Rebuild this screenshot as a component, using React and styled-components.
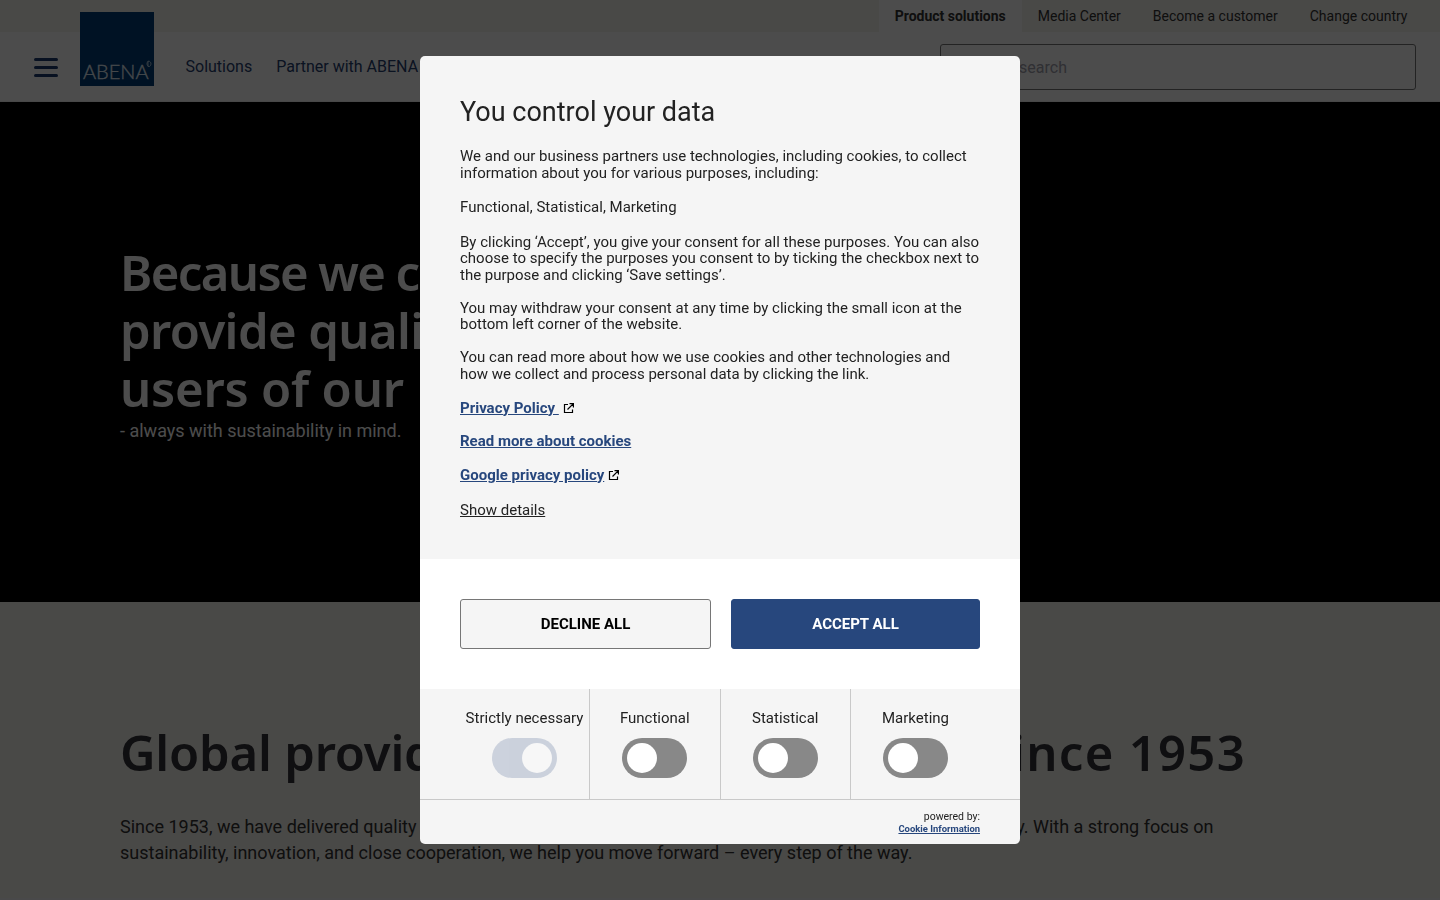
import React from "react"
import styled, { createGlobalStyle } from "styled-components"

const links = ["Media Center", "Become a customer", "Change country"]
const categories = ["Strictly necessary", "Functional", "Statistical", "Marketing"]

const ExternalIcon = () => (
  <Icon viewBox="0 0 11 11" width="11" height="11">
    <path d="M5 1.500H1.500v8h8V6.500M6.500 0.600h3.900v3.900M10.400 0.600L4.500 6.500" />
  </Icon>
)

const App = () => (
  <>
    <GlobalStyle />
    <Page>
      <TopBar>
        <TopLink $active>Product solutions</TopLink>
        {links.map(l => <TopLink key={l}>{l}</TopLink>)}
      </TopBar>
      <Header>
        <Burger><span /><span /><span /></Burger>
        <Logo>
          <LogoText>ABENA</LogoText>
          <Leaf viewBox="0 0 6 8" width="6" height="8">
            <path d="M2.500 .8C.5 2.500.5 5 2.500 6.800C1.800 4.800 1.800 3 2.500 .8zM3.300 1.200C5.500 2.500 5.500 5 3.200 6.800" />
          </Leaf>
        </Logo>
        <NavLink>Solutions</NavLink>
        <NavLink>Partner with ABENA</NavLink>
        <Search>Start your search</Search>
      </Header>
      <Hero>
        <HeroTitle>
          <Line $spacing={-1.6}>Because we care, we</Line>
          <Line $spacing={-0.6}>provide quality for</Line>
          <Line $spacing={-0.2}>users of our products</Line>
        </HeroTitle>
        <HeroText>- always with sustainability in mind.</HeroText>
      </Hero>
      <Intro>
        <IntroTitle><Line $spacing={-0.2}>Global provider of</Line><Line $spacing={1.3}>since 1953</Line></IntroTitle>
        <IntroText>
          <IntroLine><span>Since 1953, we have delivered quality</span><span>every day. With a strong focus on</span></IntroLine>
          <div>sustainability, innovation, and close cooperation, we help you move forward – every step of the way.</div>
        </IntroText>
      </Intro>
    </Page>
    <Overlay>
      <Dialog>
        <Content>
          <Title>You control your data</Title>
          <Paragraph>
            We and our business partners use technologies, including cookies, to collect
            information about you for various purposes, including:
          </Paragraph>
          <Paragraph $gap={18.5}>Functional, Statistical, Marketing</Paragraph>
          <Paragraph $gap={16.5}>
            By clicking ‘Accept’, you give your consent for all these purposes. You can also
            choose to specify the purposes you consent to by ticking the checkbox next to
            the purpose and clicking ‘Save settings’.
          </Paragraph>
          <Paragraph $gap={16.5}>
            You may withdraw your consent at any time by clicking the small icon at the
            bottom left corner of the website.
          </Paragraph>
          <Paragraph>
            You can read more about how we use cookies and other technologies and
            how we collect and process personal data by clicking the link.
          </Paragraph>
          <LinkRow><PolicyLink>Privacy Policy&nbsp;</PolicyLink><ExternalIcon /></LinkRow>
          <LinkRow><PolicyLink>Read more about cookies</PolicyLink></LinkRow>
          <LinkRow><PolicyLink>Google privacy policy</PolicyLink><ExternalIcon /></LinkRow>
          <Details>Show details</Details>
        </Content>
        <Actions>
          <Button>DECLINE ALL</Button>
          <Button $primary>ACCEPT ALL</Button>
        </Actions>
        <Categories>
          {categories.map((name, i) => (
            <Category key={name}>
              <span>{name}</span>
              <Toggle $on={i === 0}><Knob /></Toggle>
            </Category>
          ))}
        </Categories>
        <Footer>
          <div>powered by:</div>
          <Brand>Cookie Information</Brand>
        </Footer>
      </Dialog>
    </Overlay>
  </>
)

export default App

const GlobalStyle = createGlobalStyle`
  * {
    box-sizing: border-box;
  }
  body {
    margin: 0;
    overflow: hidden;
    font-family: Roboto, "Liberation Sans", sans-serif;
  }
`
const Page = styled.div`
  height: 900px;
  overflow: hidden;
  background: #f4f3f8;
`
const TopBar = styled.div`
  height: 32px;
  display: flex;
  justify-content: flex-end;
  padding-right: 16.500px;
  background: #f5f3ee;
`
const TopLink = styled.div`
  padding: 0 16px;
  line-height: 32px;
  font-size: 14px;
  font-weight: ${p => p.$active ? 700 : 400};
  color: #323232;
  background: ${p => p.$active ? '#fff' : 'none'};
`
const Header = styled.div`
  height: 70px;
  display: flex;
  align-items: center;
  padding: 0 24px 0 34px;
  border-bottom: 1px solid #f0f0f0;
  background: #fff;
`
const Burger = styled.div`
  width: 24px;
  margin-top: 1px;
  display: flex;
  flex-direction: column;
  gap: 5px;

  & > span {
    height: 3px;
    border-radius: 2px;
    background: #1c3b70;
  }
`
const Logo = styled.div`
  position: relative;
  width: 74px;
  height: 74px;
  margin: -36px 31.500px 0 22px;
  display: flex;
  align-items: flex-end;
  background: #003c78;
`
const LogoText = styled.div`
  padding-left: 3px;
  font-family: Lato, sans-serif;
  font-weight: 300;
  font-size: 20px;
  line-height: 29px;
  color: #e6f2fa;
  -webkit-text-stroke: 0.3px #e6f2fa;
`
const Leaf = styled.svg`
  position: absolute;
  right: 2px;
  top: 48px;
  fill: none;
  stroke: #dcebf5;
  stroke-width: 0.8;
`
const NavLink = styled.div`
  margin-right: 24px;
  font-size: 16px;
  white-space: nowrap;
  color: #27406f;
`
const Search = styled.div`
  width: 476px;
  height: 46px;
  margin-left: auto;
  margin-top: 1px;
  padding-right: 348px;
  border: 1px solid #777;
  border-radius: 3px;
  font-size: 16px;
  line-height: 46px;
  text-align: right;
  white-space: nowrap;
  color: #a0a0ac;
`
const Hero = styled.div`
  height: 500px;
  padding: 141px 120px 0;
  background: #000;
  color: #fff;
`
const HeroTitle = styled.div`
  margin-bottom: 2px;
  font-family: "Noto Sans", sans-serif;
  font-weight: 600;
  font-size: 49px;
  line-height: 58px;
`
const Line = styled.div`
  letter-spacing: ${p => p.$spacing}px;
  white-space: nowrap;
`
const HeroText = styled.div`
  font-size: 18px;
  line-height: 24px;
`
const Intro = styled.div`
  height: 296px;
  padding: 115px 120px 0;
  background: #f5f3ee;
  color: #323232;
`
const IntroTitle = styled.div`
  width: 1126px;
  display: flex;
  justify-content: space-between;
  font-family: "Noto Sans", sans-serif;
  font-weight: 600;
  font-size: 49px;
  line-height: 70px;
  color: #343439;
`
const IntroText = styled.div`
  margin-top: 27px;
  font-size: 18px;
  line-height: 26px;
`
const IntroLine = styled.div`
  width: 1093.500px;
  display: flex;
  justify-content: space-between;
`
const Overlay = styled.div`
  position: fixed;
  inset: 0;
  display: flex;
  align-items: center;
  justify-content: center;
  background: rgba(0, 0, 0, 0.7);
`
const Dialog = styled.div`
  width: 600px;
  height: 788px;
  overflow: hidden;
  border-radius: 5px;
  background: #f5f5f5;
  color: #222;
`
const Content = styled.div`
  height: 503px;
  padding: 40px 40px 0;
`
const Title = styled.h2`
  margin: 0 0 20px;
  font-size: 27px;
  font-weight: 400;
  line-height: 32px;
`
const Paragraph = styled.p`
  margin: 0 0 ${p => p.$gap || 17.5}px;
  font-size: 15px;
  line-height: 16.500px;
`
const LinkRow = styled.div`
  height: 17px;
  margin-bottom: 16.500px;
  display: flex;
  align-items: center;
  gap: 4px;
`
const PolicyLink = styled.a`
  font-size: 15px;
  font-weight: 700;
  line-height: 17px;
  text-decoration: underline;
  color: #27477d;
`
const Icon = styled.svg`
  fill: none;
  stroke: #000;
  stroke-width: 1.200;
`
const Details = styled.div`
  margin-top: 17.500px;
  font-size: 15px;
  line-height: 18px;
  text-decoration: underline;
`
const Actions = styled.div`
  height: 130px;
  display: flex;
  gap: 20px;
  padding: 40px;
  background: #fff;
`
const Button = styled.button`
  width: ${p => p.$primary ? 249 : 251}px;
  height: 50px;
  padding: 0;
  border: 1px solid ${p => p.$primary ? '#27477d' : '#767676'};
  border-radius: 3px;
  font-family: inherit;
  font-size: 15px;
  font-weight: 700;
  background: ${p => p.$primary ? '#27477d' : '#f5f5f5'};
  color: ${p => p.$primary ? '#fff' : '#000'};
`
const Categories = styled.div`
  height: 111px;
  padding: 0 40px;
  display: grid;
  grid-template-columns: 130px 130.500px 130.500px 129px;
  border-bottom: 1px solid #c9c9c9;
`
const Category = styled.div`
  display: flex;
  flex-direction: column;
  align-items: center;
  padding-top: 20px;
  border-right: 1px solid #c9c9c9;
  font-size: 15px;
  line-height: 18px;
  white-space: nowrap;

  &:last-child {
    border-right: 0;
  }
`
const Toggle = styled.div`
  width: 65px;
  height: 40px;
  margin-top: 11px;
  padding: 5px;
  display: flex;
  justify-content: ${p => p.$on ? 'flex-end' : 'flex-start'};
  border-radius: 20px;
  background: ${p => p.$on ? '#27477d' : '#888'};
  opacity: ${p => p.$on ? 0.2 : 1};
`
const Knob = styled.div`
  width: 30px;
  height: 30px;
  border-radius: 50%;
  background: #fff;
`
const Footer = styled.div`
  padding: 11px 40px 0;
  font-size: 10.500px;
  line-height: 12px;
  text-align: right;
`
const Brand = styled.a`
  display: block;
  font-size: 9.450px;
  font-weight: 700;
  text-decoration: underline;
  color: #27477d;
`
